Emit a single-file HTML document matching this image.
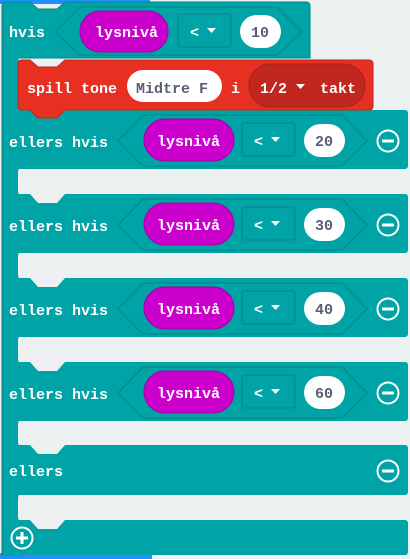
<!DOCTYPE html>
<html><head><meta charset="utf-8"><style>
html,body{margin:0;padding:0;background:#ecf0f1;}
svg{display:block}
text{font-family:"Liberation Mono","DejaVu Sans Mono",monospace;font-weight:bold;font-size:15px;}
</style></head><body>
<svg width="410" height="559" viewBox="0 0 410 559" xmlns="http://www.w3.org/2000/svg">
<rect width="410" height="559" fill="#ecf0f1"/>
<g fill="#d4dadc" font-size="10">
</g>
<!-- blue top/bottom -->
<rect x="0" y="0" width="150" height="4" fill="#1e90ff"/>
<rect x="0" y="553" width="152" height="6" fill="#1e90ff"/>
<!-- teal body -->
<path d="M2,6 q0,-4 4,-4 H30 L38,9 H57 L65,2 H306 q4,0 4,4 V58 H18 V555 H2 Z" fill="#00a4a6" stroke="#008a8c" stroke-width="1"/>
<rect x="2" y="110" width="406" height="59" rx="3" fill="#00a4a6"/>
<rect x="2" y="194" width="406" height="59" rx="3" fill="#00a4a6"/>
<rect x="2" y="278" width="406" height="59" rx="3" fill="#00a4a6"/>
<rect x="2" y="362" width="406" height="59" rx="3" fill="#00a4a6"/>
<rect x="2" y="445" width="406" height="50" rx="3" fill="#00a4a6"/>
<rect x="2" y="520" width="406" height="35" rx="3" fill="#00a4a6"/>
<rect x="2" y="56" width="16" height="470" fill="#00a4a6"/>
<line x1="2.5" y1="6" x2="2.5" y2="555" stroke="#008a8c"/>
<!-- gaps -->
<g fill="#ecf0f1">
<path d="M18,172 q0,-3 3,-3 H30 L38,178 H57 L65,169 H408 V194 H65 L57,203 H38 L30,194 H21 q-3,0 -3,-3 Z"/>
<path d="M18,256 q0,-3 3,-3 H30 L38,262 H57 L65,253 H408 V278 H65 L57,287 H38 L30,278 H21 q-3,0 -3,-3 Z"/>
<path d="M18,340 q0,-3 3,-3 H30 L38,346 H57 L65,337 H408 V362 H65 L57,371 H38 L30,362 H21 q-3,0 -3,-3 Z"/>
<path d="M18,424 q0,-3 3,-3 H30 L38,430 H57 L65,421 H408 V445 H65 L57,454 H38 L30,445 H21 q-3,0 -3,-3 Z"/>
<path d="M18,498 q0,-3 3,-3 H30 L38,504 H57 L65,495 H408 V520 H65 L57,529 H38 L30,520 H21 q-3,0 -3,-3 Z"/>
</g>
<!-- red block -->
<path d="M18,64 q0,-4 4,-4 H30 L38,67 H57 L65,60 H369 q4,0 4,4 V106 q0,4 -4,4 H65 L57,118 H38 L30,110 H22 q-4,0 -4,-4 Z" fill="#e63022" stroke="#c0271b" stroke-width="1"/>
<rect x="127" y="70" width="95" height="32" rx="16" fill="#fff"/>
<rect x="249" y="64" width="116" height="43" rx="21" fill="#c0271f" stroke="#a8221a"/>
<text x="27" y="93" fill="#fff">spill tone</text>
<text x="136" y="93" fill="#575e75" font-weight="normal">Midtre F</text>
<text x="231" y="93" fill="#fff">i</text>
<text x="260" y="93" fill="#fff">1/2</text>
<path d="M296,84 h9 l-4.5,5 z" fill="#fff"/>
<text x="320" y="93" fill="#fff">takt</text>
<!-- hvis row -->
<text x="9" y="37" fill="#fff">hvis</text>
<path d="M55,32 L80,7 H277 L302,32 L277,55 H80 Z" fill="#00a4a6" stroke="#008789"/>
<rect x="80" y="11" width="88" height="41" rx="20" fill="#cc00cc" stroke="#a300a3"/>
<text x="95" y="37" fill="#fff">lysnivå</text>
<rect x="178" y="14" width="53" height="33" rx="3" fill="#00a4a6" stroke="#008789"/>
<text x="190" y="37" fill="#fff">&lt;</text>
<path d="M207,28 h9 l-4.5,5 z" fill="#fff"/>
<rect x="240" y="15" width="41" height="33" rx="16.5" fill="#fff"/>
<text x="251" y="37" fill="#575e75" font-weight="normal">10</text>
<!-- ellers hvis rows -->
<g id="r1">
<text x="9" y="147" fill="#fff">ellers hvis</text>
<path d="M118,141 L143,115 H342 L367,141 L342,166 H143 Z" fill="#00a4a6" stroke="#008789"/>
<rect x="144" y="119" width="90" height="42" rx="21" fill="#cc00cc" stroke="#a300a3"/>
<text x="157" y="146" fill="#fff">lysnivå</text>
<rect x="242" y="123" width="53" height="33" rx="3" fill="#00a4a6" stroke="#008789"/>
<text x="254" y="146" fill="#fff">&lt;</text>
<path d="M271,137 h9 l-4.5,5 z" fill="#fff"/>
<rect x="304" y="124" width="41" height="33" rx="16.5" fill="#fff"/>
<text x="315" y="146" fill="#575e75" font-weight="normal">20</text>
<circle cx="388" cy="141" r="10.5" fill="none" stroke="#fff" stroke-width="2"/>
<rect x="382" y="139.5" width="12" height="3" fill="#fff"/>
</g>
<g transform="translate(0,84)">
<text x="9" y="147" fill="#fff">ellers hvis</text>
<path d="M118,141 L143,115 H342 L367,141 L342,166 H143 Z" fill="#00a4a6" stroke="#008789"/>
<rect x="144" y="119" width="90" height="42" rx="21" fill="#cc00cc" stroke="#a300a3"/>
<text x="157" y="146" fill="#fff">lysnivå</text>
<rect x="242" y="123" width="53" height="33" rx="3" fill="#00a4a6" stroke="#008789"/>
<text x="254" y="146" fill="#fff">&lt;</text>
<path d="M271,137 h9 l-4.5,5 z" fill="#fff"/>
<rect x="304" y="124" width="41" height="33" rx="16.5" fill="#fff"/>
<text x="315" y="146" fill="#575e75" font-weight="normal">30</text>
<circle cx="388" cy="141" r="10.5" fill="none" stroke="#fff" stroke-width="2"/>
<rect x="382" y="139.5" width="12" height="3" fill="#fff"/>
</g>
<g transform="translate(0,168)">
<text x="9" y="147" fill="#fff">ellers hvis</text>
<path d="M118,141 L143,115 H342 L367,141 L342,166 H143 Z" fill="#00a4a6" stroke="#008789"/>
<rect x="144" y="119" width="90" height="42" rx="21" fill="#cc00cc" stroke="#a300a3"/>
<text x="157" y="146" fill="#fff">lysnivå</text>
<rect x="242" y="123" width="53" height="33" rx="3" fill="#00a4a6" stroke="#008789"/>
<text x="254" y="146" fill="#fff">&lt;</text>
<path d="M271,137 h9 l-4.5,5 z" fill="#fff"/>
<rect x="304" y="124" width="41" height="33" rx="16.5" fill="#fff"/>
<text x="315" y="146" fill="#575e75" font-weight="normal">40</text>
<circle cx="388" cy="141" r="10.5" fill="none" stroke="#fff" stroke-width="2"/>
<rect x="382" y="139.5" width="12" height="3" fill="#fff"/>
</g>
<g transform="translate(0,252)">
<text x="9" y="147" fill="#fff">ellers hvis</text>
<path d="M118,141 L143,115 H342 L367,141 L342,166 H143 Z" fill="#00a4a6" stroke="#008789"/>
<rect x="144" y="119" width="90" height="42" rx="21" fill="#cc00cc" stroke="#a300a3"/>
<text x="157" y="146" fill="#fff">lysnivå</text>
<rect x="242" y="123" width="53" height="33" rx="3" fill="#00a4a6" stroke="#008789"/>
<text x="254" y="146" fill="#fff">&lt;</text>
<path d="M271,137 h9 l-4.5,5 z" fill="#fff"/>
<rect x="304" y="124" width="41" height="33" rx="16.5" fill="#fff"/>
<text x="315" y="146" fill="#575e75" font-weight="normal">60</text>
<circle cx="388" cy="141" r="10.5" fill="none" stroke="#fff" stroke-width="2"/>
<rect x="382" y="139.5" width="12" height="3" fill="#fff"/>
</g>
<!-- ellers -->
<text x="9" y="476" fill="#fff">ellers</text>
<circle cx="388" cy="471" r="10.5" fill="none" stroke="#fff" stroke-width="2"/>
<rect x="382" y="469.5" width="12" height="3" fill="#fff"/>
<!-- plus -->
<circle cx="22" cy="538" r="10.5" fill="none" stroke="#fff" stroke-width="2"/>
<rect x="16" y="536.5" width="12" height="3" fill="#fff"/>
<rect x="20.5" y="532" width="3" height="12" fill="#fff"/>
</svg>
</body></html>
